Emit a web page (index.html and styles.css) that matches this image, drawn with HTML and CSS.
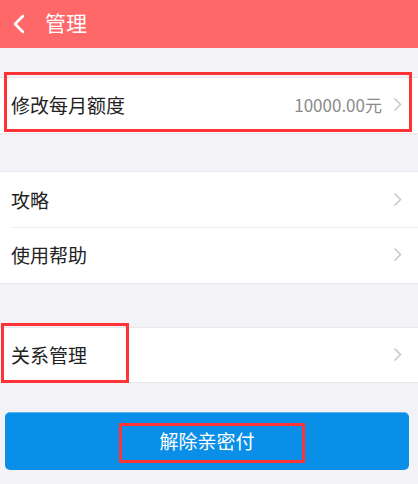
FILE: index.html
```html
<!DOCTYPE html>
<html lang="zh-CN">
<head>
<meta charset="utf-8">
<title>管理</title>
<link rel="stylesheet" href="styles.css">
</head>
<body>
<div class="page">
  <header class="topbar">
    <svg class="back" width="14" height="20" viewBox="0 0 14 20"><polyline points="11,2 3,10 11,18" fill="none" stroke="#fff" stroke-width="2.6" stroke-linecap="round" stroke-linejoin="round"/></svg>
    <h1 class="title">管理</h1>
  </header>

  <section class="group g1">
    <div class="row">
      <span class="label">修改每月额度</span>
      <span class="value">10000.00元</span>
      <svg class="chev" width="9" height="15" viewBox="0 0 9 15"><polyline points="1.5,1.5 7.5,7.5 1.5,13.5" fill="none" stroke="#c8c8cc" stroke-width="1.5"/></svg>
    </div>
  </section>

  <section class="group g2">
    <div class="row r-a">
      <span class="label">攻略</span>
      <svg class="chev" width="9" height="15" viewBox="0 0 9 15"><polyline points="1.5,1.5 7.5,7.5 1.5,13.5" fill="none" stroke="#c8c8cc" stroke-width="1.5"/></svg>
    </div>
    <div class="row r-b">
      <span class="label">使用帮助</span>
      <svg class="chev" width="9" height="15" viewBox="0 0 9 15"><polyline points="1.5,1.5 7.5,7.5 1.5,13.5" fill="none" stroke="#c8c8cc" stroke-width="1.5"/></svg>
    </div>
  </section>

  <section class="group g3">
    <div class="row r-c">
      <span class="label">关系管理</span>
      <svg class="chev" width="9" height="15" viewBox="0 0 9 15"><polyline points="1.5,1.5 7.5,7.5 1.5,13.5" fill="none" stroke="#c8c8cc" stroke-width="1.5"/></svg>
    </div>
  </section>

  <div class="btn-wrap">
    <button class="btn">解除亲密付</button>
  </div>

  <div class="mark m1"></div>
  <div class="mark m2"></div>
  <div class="mark m3"></div>
</div>
</body>
</html>
```

FILE: styles.css
```css
* { box-sizing: border-box; }
html, body { margin: 0; padding: 0; }
body {
  background: #f3f3f7;
  font-family: "Noto Sans CJK SC", "Noto Sans", sans-serif;
  width: 418px;
  height: 484px;
  overflow: hidden;
}
.page { position: relative; width: 418px; height: 484px; }

.topbar {
  height: 48px;
  background: #ff6868;
  display: flex;
  align-items: center;
  padding-left: 12px;
}
.back { display: block; margin-top: -1px; }
.title {
  margin: 0 0 0 19px;
  font-size: 21px;
  font-weight: 400;
  color: #fff;
  line-height: 1;
  margin-top: -3px;
}

.group {
  background: #fff;
  border-top: 1px solid #e8e8ec;
  border-bottom: 1px solid #e8e8ec;
}
.g1 { margin-top: 29px; }
.g2 { margin-top: 37px; }
.g3 { margin-top: 43px; }

.row {
  height: 55px;
  display: flex;
  align-items: center;
  padding: 0 16px 2px 11px;
}
.r-a { height: 56px; position: relative; }
.r-c { height: 54px; }
.r-a::after {
  content: "";
  position: absolute;
  left: 11px; right: 0; bottom: 0;
  height: 1px;
  background: #ececf0;
}
.label {
  flex: 1;
  font-size: 19px;
  color: #222;
  line-height: 1;
}
.value {
  font-size: 17px;
  color: #8a8a8a;
  margin-right: 11px;
  line-height: 1;
}
.chev { display: block; }

.btn-wrap { padding: 29px 9px 0 5px; }
.btn {
  display: block;
  width: 100%;
  height: 58px;
  border: none;
  border-top: 1px solid #5db3f0;
  border-radius: 5px;
  background: #0a8fe9;
  color: #fff;
  font-family: "Noto Sans CJK SC", "Noto Sans", sans-serif;
  font-size: 19px;
  padding: 0 0 2px 0;
}

.mark {
  position: absolute;
  border: 3px solid #ff3236;
  pointer-events: none;
}
.m1 { left: 4px; top: 72px; width: 408px; height: 60px; }
.m2 { left: 1px; top: 323px; width: 128px; height: 60px; }
.m3 { left: 119px; top: 423px; width: 186px; height: 40px; }
```
